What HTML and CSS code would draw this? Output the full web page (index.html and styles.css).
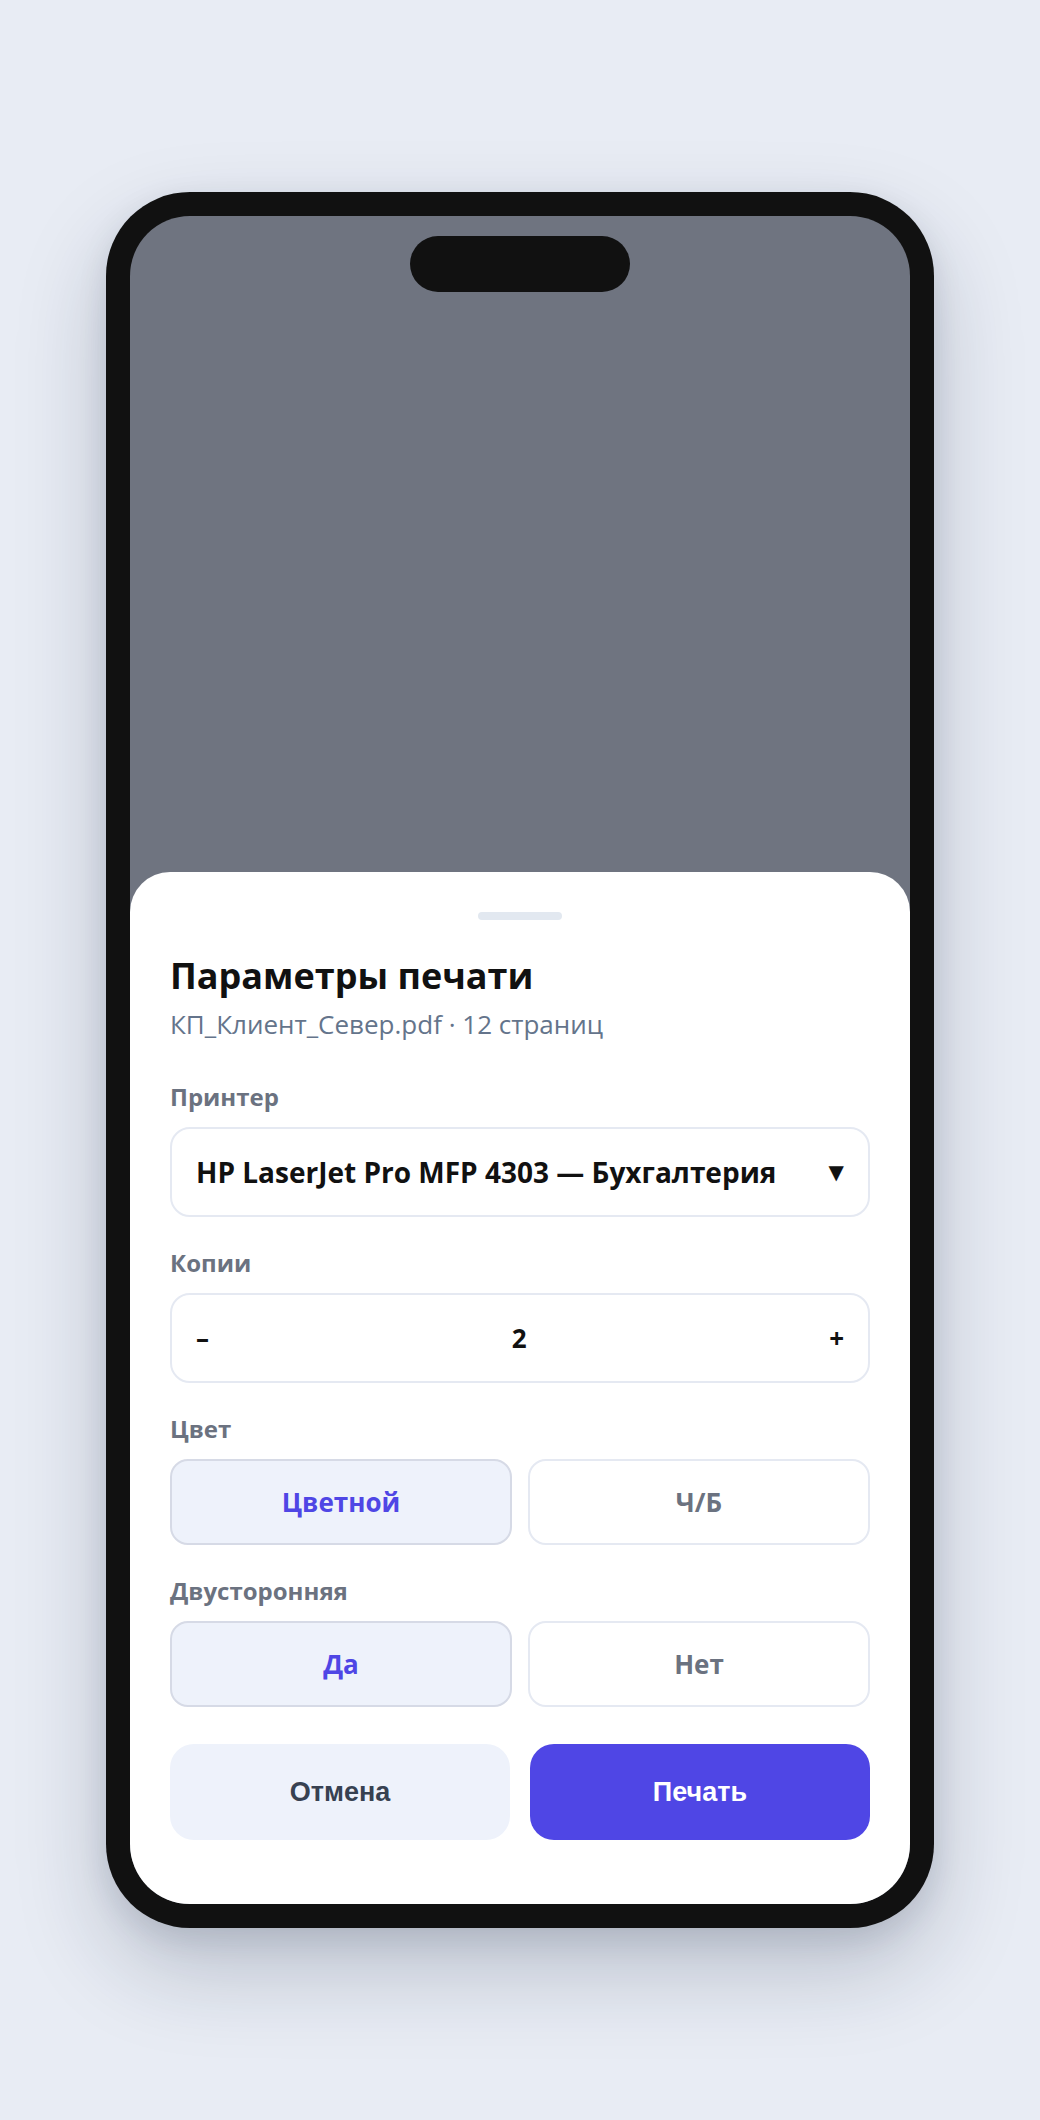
FILE: index.html
```html
<!DOCTYPE html>
<html lang="ru">
<head>
  <meta charset="UTF-8" />
  <meta name="viewport" content="width=device-width, initial-scale=1.0"/>
  <title>Параметры печати</title>
  <link rel="stylesheet" href="styles.css">
</head>
<body>

  <div class="phone">
    <div class="screen">
      <div class="island"></div>

      <div class="sheet">
        <div class="handle"></div>
        <h2>Параметры печати</h2>
        <p class="file">КП_Клиент_Север.pdf · 12 страниц</p>

        <div class="field">
          <div class="label">Принтер</div>
          <div class="select">
            <span>HP LaserJet Pro MFP 4303 — Бухгалтерия</span>
            <span class="arrow">▼</span>
          </div>
        </div>

        <div class="field">
          <div class="label">Копии</div>
          <div class="stepper">
            <span>–</span>
            <span>2</span>
            <span>+</span>
          </div>
        </div>

        <div class="field">
          <div class="label">Цвет</div>
          <div class="segments">
            <div class="seg active">Цветной</div>
            <div class="seg">Ч/Б</div>
          </div>
        </div>

        <div class="field">
          <div class="label">Двусторонняя</div>
          <div class="segments">
            <div class="seg active">Да</div>
            <div class="seg">Нет</div>
          </div>
        </div>

        <div class="actions">
          <button class="cancel">Отмена</button>
          <button class="print">Печать</button>
        </div>
      </div>
    </div>
  </div>

</body>
</html>
```

FILE: styles.css
```css
* { margin: 0; padding: 0; box-sizing: border-box; }

body {
  font-family: 'Open Sans', 'Noto Sans', sans-serif;
  background-color: #e8ecf4;
  color: #111;
  height: 100vh;
  display: flex;
  justify-content: center;
  align-items: center;
}

.phone {
  width: 828px;
  height: 1736px;
  padding: 24px;
  background: #111;
  border-radius: 84px;
  box-shadow: 0 40px 90px rgba(20, 30, 60, 0.22), 0 10px 30px rgba(20, 30, 60, 0.1);
}

.screen {
  position: relative;
  height: 100%;
  background: #6f7480;
  border-radius: 60px;
  overflow: hidden;
  display: flex;
  flex-direction: column;
}

.island {
  position: absolute;
  top: 20px;
  left: 50%;
  transform: translateX(-50%);
  width: 220px;
  height: 56px;
  background: #111;
  border-radius: 28px;
}

.sheet {
  margin-top: auto;
  background: #fff;
  border-radius: 40px 40px 0 0;
  padding: 40px 40px 64px;
}

.handle {
  width: 84px;
  height: 8px;
  border-radius: 4px;
  background: #e2e8f0;
  margin: 0 auto 35px;
}

.sheet h2 {
  font-size: 36px;
  line-height: 42px;
  font-weight: 700;
  color: #111;
}

.file {
  margin-top: 11px;
  font-size: 26px;
  line-height: 32px;
  color: #64748b;
  margin-bottom: 44px;
}

.field + .field {
  margin-top: 33px;
}

.label {
  font-size: 24px;
  line-height: 26px;
  font-weight: 700;
  color: #6b7280;
  margin-bottom: 17px;
}

.select,
.stepper {
  height: 90px;
  padding: 0 24px;
  border: 2px solid #e5e9f2;
  border-radius: 20px;
  display: flex;
  justify-content: space-between;
  align-items: center;
  font-size: 28px;
  font-weight: 700;
}

.stepper {
  font-size: 26px;
}

.select .arrow {
  font-family: 'DejaVu Sans', sans-serif;
  font-size: 20px;
}

.segments {
  display: grid;
  grid-template-columns: 1fr 1fr;
  gap: 16px;
}

.seg {
  height: 86px;
  border: 2px solid #e5e9f2;
  border-radius: 18px;
  display: flex;
  justify-content: center;
  align-items: center;
  font-size: 26px;
  font-weight: 700;
  color: #6b7280;
}

.seg.active {
  background: #eef2fb;
  border-color: #d6dae6;
  color: #4f46e5;
}

.actions {
  margin-top: 37px;
  display: grid;
  grid-template-columns: 1fr 1fr;
  gap: 20px;
}

.actions button {
  height: 96px;
  border: none;
  border-radius: 24px;
  font-family: 'Liberation Sans', Arial, sans-serif;
  font-size: 27px;
  font-weight: 700;
  cursor: pointer;
}

.cancel {
  background: #eef2fb;
  color: #374151;
}

.print {
  background: #4f46e5;
  color: #fff;
}
```
